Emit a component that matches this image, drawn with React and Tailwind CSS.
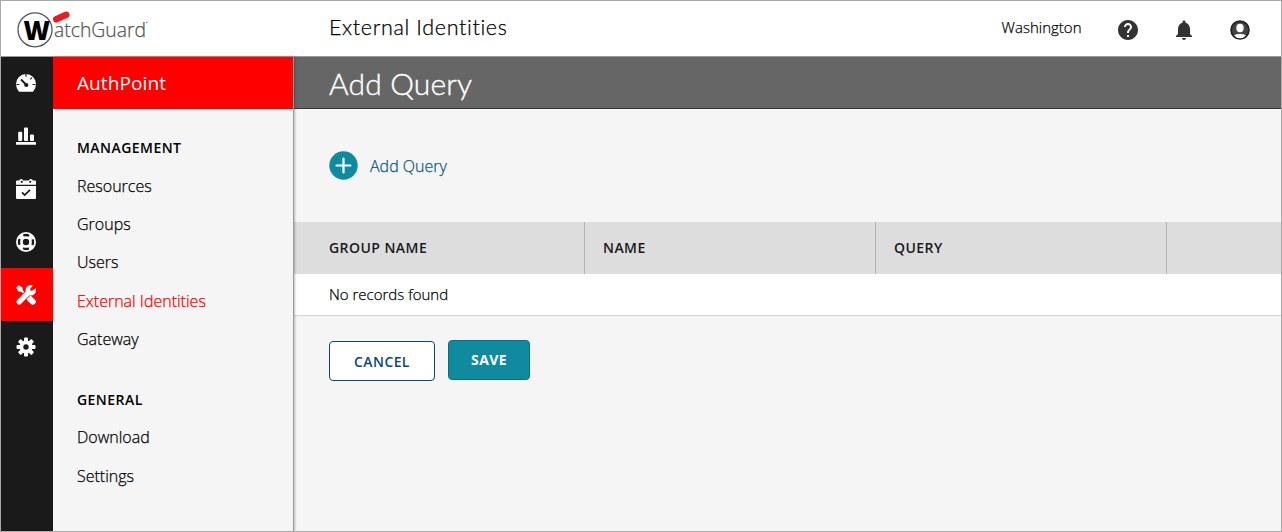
import React from "react";
import { MdHelp, MdNotifications } from "react-icons/md";

function GaugeIcon() {
  return (
    <svg width="20" height="20" viewBox="0 0 20 20">
      <path d="M3 18.7Q0 15.500 0 11A10 10 0 0 1 20 11Q20 15.500 17 18.700Z" fill="#fff" />
      <g stroke="#1a1a1a" strokeWidth="1.2">
        <path d="M10 .8V3.800M15.800 4.700l-1.500 1.700M19.500 11.500h-3M.5 11.500h3" />
      </g>
      <path d="M5 6.500l5 5" stroke="#1a1a1a" strokeWidth="1.8" />
      <circle cx="10.3" cy="12" r="2.1" fill="#1a1a1a" />
    </svg>
  );
}

function BarsIcon() {
  return (
    <svg width="20" height="20" viewBox="0 0 20 20" fill="#fff">
      <rect x="2.200" y="5.800" width="4" height="9.200" rx="1" />
      <rect x="8" y="1.500" width="4" height="13.500" rx="1" />
      <rect x="14" y="8.500" width="4" height="6.500" rx="1" />
      <rect x="0" y="16" width="20" height="2.8" rx=".5" />
    </svg>
  );
}

function CalendarIcon() {
  return (
    <svg width="20" height="20" viewBox="0 0 20 20">
      <path d="M1 1.500h2.200Q3.500 0 5.200 0T7.200 1.500h5.600Q13.100 0 14.800 0t2 1.500H19q1 0 1 1V5.800H0V2.500q0-1 1-1z" fill="#fff" />
      <path d="M0 7h20V19q0 1-1 1H1q-1 0-1-1z" fill="#fff" />
      <circle cx="5.800" cy="2.800" r="1.100" fill="#1a1a1a" />
      <circle cx="14.200" cy="2.800" r="1.100" fill="#1a1a1a" />
      <path d="M6 13.300l2.700 2.700L14 10.800" fill="none" stroke="#1a1a1a" strokeWidth="1.700" />
    </svg>
  );
}

function BuoyIcon() {
  return (
    <svg width="20" height="20" viewBox="0 0 20 20">
      <circle cx="10" cy="10" r="10" fill="#fff" />
      <circle cx="10" cy="10" r="7" fill="none" stroke="#1a1a1a" strokeWidth="2.300" strokeDasharray="6 4.996" strokeDashoffset="3" />
      <circle cx="10" cy="10" r="3.200" fill="#1a1a1a" />
    </svg>
  );
}

function ToolsIcon() {
  return (
    <svg width="20" height="20" viewBox="0 0 20 20" className="overflow-visible">
      <path d="M3.500 3.500L13 13" stroke="#fff" strokeWidth="2" />
      <path d="M.2 2.800L2.800.2 6.400 2.400 6.800 5 5 6.800 2.400 6.400Z" fill="#fff" />
      <path d="M13.600 13.600l3.200 3.200" stroke="#fff" strokeWidth="5.800" strokeLinecap="round" />
      <path d="M3.200 16.800L13.500 6.500" stroke="#f00" strokeWidth="7" />
      <path d="M3.200 16.800L13.500 6.500" stroke="#fff" strokeWidth="5.400" strokeLinecap="round" />
      <circle cx="14.800" cy="5.200" r="5.200" fill="#fff" />
      <path d="M14.200 5.800L14.400 3.400 18 -1 21 2 16.600 5.600Z" fill="#f00" />
    </svg>
  );
}

function GearIcon() {
  return (
    <svg width="20" height="20" viewBox="-10 -10 20 20">
      <g fill="#fff">
        <rect x="-2" y="-9.500" width="4" height="19" rx="1" />
        <rect x="-2" y="-9.500" width="4" height="19" rx="1" transform="rotate(45)" />
        <rect x="-2" y="-9.500" width="4" height="19" rx="1" transform="rotate(90)" />
        <rect x="-2" y="-9.500" width="4" height="19" rx="1" transform="rotate(135)" />
        <circle r="6.500" />
      </g>
      <circle r="2.700" fill="#1a1a1a" />
    </svg>
  );
}

function UserIcon() {
  return (
    <svg width="24" height="24" viewBox="-2 -2 24 24">
      <circle cx="10" cy="10" r="8.900" fill="#444" stroke="#222" strokeWidth="1.800" />
      <path d="M4 15.600Q6 13.700 10 13.700t6 1.900a8 8 0 0 1-12 0z" fill="#fff" />
      <ellipse cx="10" cy="8" rx="3.700" ry="4.300" fill="#fff" />
    </svg>
  );
}

function Logo() {
  return (
    <svg width="134" height="44" viewBox="0 0 134 44" className="block">
      <circle cx="18" cy="22.800" r="17" fill="#fff" stroke="#555" strokeWidth="1.300" />
      <text x="6.500" y="32.500" fontFamily="Open Sans" fontWeight="800" fontSize="26" textLength="26.500" lengthAdjust="spacingAndGlyphs" fill="#000">W</text>
      <path d="M39.300 12.300l10-4.500" stroke="#e91c24" strokeWidth="6.500" strokeLinecap="round" />
      <text x="37" y="29.800" fontFamily="Open Sans" fontWeight="300" fontSize="20.500" textLength="92" lengthAdjust="spacingAndGlyphs" fill="#555" stroke="#555" strokeWidth=".25">atchGuard</text>
      <circle cx="129.800" cy="15.500" r=".8" fill="#777" />
    </svg>
  );
}

const rail = [
  { id: "dashboard", icon: <GaugeIcon /> },
  { id: "reports", icon: <BarsIcon /> },
  { id: "schedule", icon: <CalendarIcon /> },
  { id: "support", icon: <BuoyIcon /> },
  { id: "configure", icon: <ToolsIcon />, active: true },
  { id: "settings", icon: <GearIcon /> },
];

function NavGroup({ title, items, active }) {
  return (
    <section>
      <h3 className="flex h-9 items-center text-[14px] font-semibold tracking-[0.45px] text-black">{title}</h3>
      <ul className="[-webkit-text-stroke:0.25px]">
        {items.map((item) => (
          <li key={item} className={item === active ? "flex h-[38.4px] items-center pt-[1.5px] text-[#f00]" : "flex h-[38.4px] items-center pt-[1.5px]"}>
            {item}
          </li>
        ))}
      </ul>
    </section>
  );
}

export default function App() {
  return (
    <div className="flex h-[532px] w-[1282px] flex-col overflow-hidden border border-[#a9a9a9] bg-[#f5f5f5] font-['Open_Sans',sans-serif] text-[16px] font-light text-black">
      <header className="flex h-14 shrink-0 items-center border-b border-[#999] bg-white">
        <div className="w-[328px] pl-4"><Logo /></div>
        <div className="flex-1 pb-0.5 font-['Lato',sans-serif] text-[21.5px] tracking-[0.65px] [-webkit-text-stroke:0.25px]">External Identities</div>
        <div className="mr-[34.5px] pb-0.5 text-[15px] [-webkit-text-stroke:0.25px]">Washington</div>
        <div className="mr-[29px] flex items-center gap-[32px] pt-0.5 text-[#333]">
          <MdHelp size={24} />
          <MdNotifications size={24} />
          <UserIcon />
        </div>
      </header>
      <div className="flex min-h-0 flex-1">
        <nav className="w-[52px] shrink-0 bg-[#1a1a1a] text-white">
          {rail.map((r) => (
            <div key={r.id} className={r.active ? "flex h-[52.8px] items-center bg-[#f00] pl-[15px]" : "flex h-[52.8px] items-center pl-[15px]"}>
              {r.icon}
            </div>
          ))}
        </nav>
        <aside className="z-10 w-[241px] shrink-0 border-r border-[#999] bg-[#f5f5f5] shadow-[1px_0_2px_rgba(0,0,0,0.25)]">
          <div className="flex h-[52px] items-center bg-[#f00] pl-6 text-[19px] font-normal tracking-[0.1px] text-white">AuthPoint</div>
          <div className="flex flex-col gap-6 pt-[20.6px] pl-6">
            <NavGroup title="MANAGEMENT" items={["Resources", "Groups", "Users", "External Identities", "Gateway"]} active="External Identities" />
            <NavGroup title="GENERAL" items={["Download", "Settings"]} />
          </div>
        </aside>
        <main className="min-w-0 flex-1">
          <h1 className="flex h-[52px] items-center border-b border-[#333] bg-[#666] pt-0.5 pl-[35px] font-['Lato',sans-serif] text-[30px] font-light tracking-[0.15px] text-white [-webkit-text-stroke:0.4px]">Add Query</h1>
          <div className="flex h-[113px] items-center gap-3 pl-[35px] text-[#0b5a78]">
            <svg width="29" height="29" viewBox="0 0 29 29">
              <circle cx="14.500" cy="14.500" r="14.200" fill="#0f8a9f" />
              <path d="M14.500 7.500v14M7.500 14.500h14" stroke="#fff" strokeWidth="2.200" strokeLinecap="round" />
            </svg>
            <span className="[-webkit-text-stroke:0.25px]">Add Query</span>
          </div>
          <div className="grid h-[52px] grid-cols-[291px_291px_291px_1fr] bg-[#ddd] text-[14px] font-semibold tracking-[0.45px] text-[#1a1a1a]">
            <div className="flex items-center border-r border-[#b5b5b5] pb-0.5 pl-[35px]">GROUP NAME</div>
            <div className="flex items-center border-r border-[#b5b5b5] pb-0.5 pl-[18px]">NAME</div>
            <div className="flex items-center border-r border-[#b5b5b5] pb-0.5 pl-[18px]">QUERY</div>
            <div />
          </div>
          <div className="flex h-[42px] items-center border-b border-[#d5d5d5] bg-white pl-[35px] text-[15px] [-webkit-text-stroke:0.25px]">No records found</div>
          <div className="flex items-start gap-[13px] pt-6 pl-[35px] text-[14px] font-semibold">
            <button className="mt-px h-10 w-[106px] rounded border border-[#0b4a6e] bg-white tracking-[0.4px] text-[#0b4a6e]">CANCEL</button>
            <button className="h-10 w-[82px] rounded border border-[#0b6f88] bg-[#0f8a9f] pb-0.5 font-bold tracking-[0.4px] text-white">SAVE</button>
          </div>
        </main>
      </div>
    </div>
  );
}
